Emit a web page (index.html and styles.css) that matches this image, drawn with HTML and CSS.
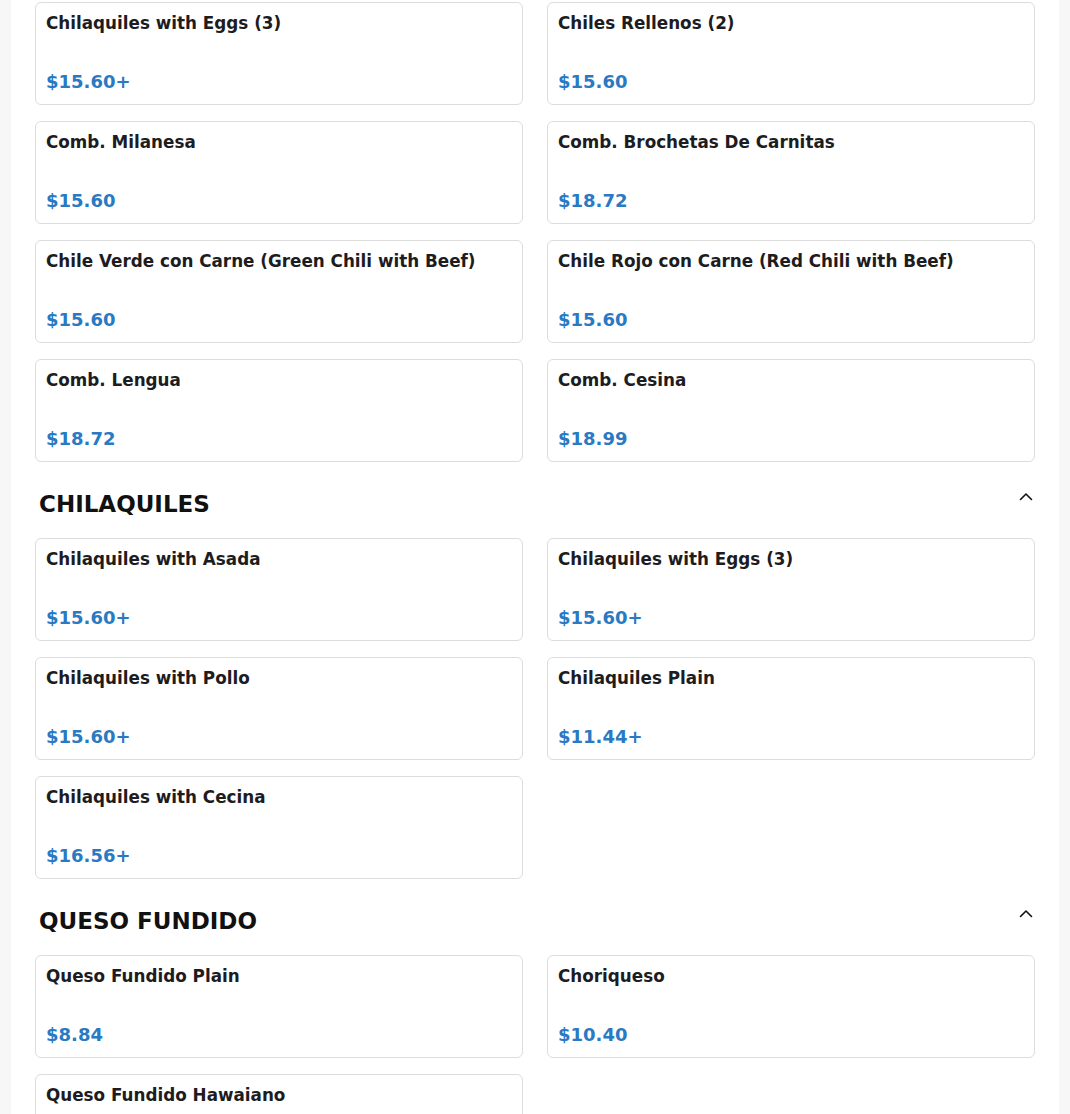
FILE: index.html
```html
<!DOCTYPE html>
<html lang="en">
<head>
<meta charset="utf-8">
<title>Menu</title>
<link rel="stylesheet" href="styles.css">
</head>
<body>
<main class="menu">
  <section class="section first">
    <div class="grid">
      <div class="card"><div class="name">Chilaquiles with Eggs (3)</div><div class="price">$15.60+</div></div>
      <div class="card"><div class="name">Chiles Rellenos (2)</div><div class="price">$15.60</div></div>
      <div class="card"><div class="name">Comb. Milanesa</div><div class="price">$15.60</div></div>
      <div class="card"><div class="name">Comb. Brochetas De Carnitas</div><div class="price">$18.72</div></div>
      <div class="card"><div class="name">Chile Verde con Carne (Green Chili with Beef)</div><div class="price">$15.60</div></div>
      <div class="card"><div class="name">Chile Rojo con Carne (Red Chili with Beef)</div><div class="price">$15.60</div></div>
      <div class="card"><div class="name">Comb. Lengua</div><div class="price">$18.72</div></div>
      <div class="card"><div class="name">Comb. Cesina</div><div class="price">$18.99</div></div>
    </div>
  </section>
  <section class="section">
    <div class="head">
      <h2 class="title">CHILAQUILES</h2>
      <svg class="chev" width="24" height="24" viewBox="0 0 24 24" aria-hidden="true"><path d="M6.5 13.5l5.5-5.5 5.5 5.5" fill="none" stroke="#111" stroke-width="1.6" stroke-linecap="round" stroke-linejoin="round"/></svg>
    </div>
    <div class="grid">
      <div class="card"><div class="name">Chilaquiles with Asada</div><div class="price">$15.60+</div></div>
      <div class="card"><div class="name">Chilaquiles with Eggs (3)</div><div class="price">$15.60+</div></div>
      <div class="card"><div class="name">Chilaquiles with Pollo</div><div class="price">$15.60+</div></div>
      <div class="card"><div class="name">Chilaquiles Plain</div><div class="price">$11.44+</div></div>
      <div class="card"><div class="name">Chilaquiles with Cecina</div><div class="price">$16.56+</div></div>
    </div>
  </section>
  <section class="section">
    <div class="head">
      <h2 class="title">QUESO FUNDIDO</h2>
      <svg class="chev" width="24" height="24" viewBox="0 0 24 24" aria-hidden="true"><path d="M6.5 13.5l5.5-5.5 5.5 5.5" fill="none" stroke="#111" stroke-width="1.6" stroke-linecap="round" stroke-linejoin="round"/></svg>
    </div>
    <div class="grid">
      <div class="card"><div class="name">Queso Fundido Plain</div><div class="price">$8.84</div></div>
      <div class="card"><div class="name">Choriqueso</div><div class="price">$10.40</div></div>
      <div class="card"><div class="name">Queso Fundido Hawaiano</div><div class="price">$10.40</div></div>
    </div>
  </section>
</main>
</body>
</html>
```
FILE: styles.css
```css
html, body {
  margin: 0;
  padding: 0;
  background: #f7f7f7;
  font-family: "DejaVu Sans", sans-serif;
}

.menu {
  margin: 0 11px;
  background: #ffffff;
  padding: 2px 24px 40px;
}

.section + .section {
  margin-top: 24px;
}

.head {
  display: flex;
  justify-content: space-between;
  align-items: flex-start;
  padding-left: 4px;
  margin-bottom: 16px;
}

.title {
  margin: 0;
  font-size: 23px;
  line-height: 36px;
  font-weight: bold;
  color: #111;
}

.chev {
  display: block;
  margin-right: -3px;
}

.grid {
  display: grid;
  grid-template-columns: 1fr 1fr;
  column-gap: 24px;
  row-gap: 16px;
}

.card {
  box-sizing: border-box;
  height: 103px;
  border: 1px solid #dcdcdc;
  border-radius: 6px;
  padding: 10px 10px;
  display: flex;
  flex-direction: column;
  justify-content: space-between;
}

.name {
  font-size: 16.8px;
  line-height: 20px;
  font-weight: bold;
  color: #1c1c21;
}

.price {
  font-size: 18px;
  line-height: 24px;
  font-weight: bold;
  color: #2a79c3;
}
```
